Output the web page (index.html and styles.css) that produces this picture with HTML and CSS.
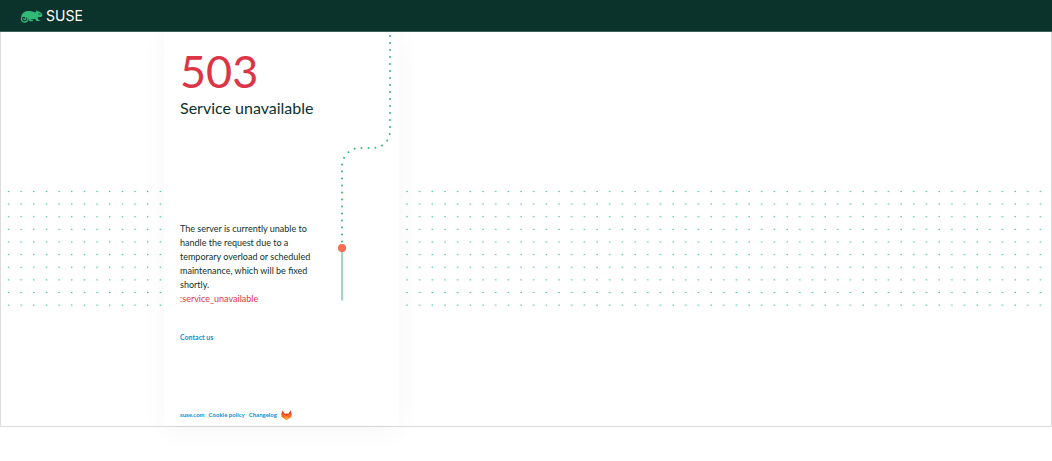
FILE: index.html
```html
<!DOCTYPE html>
<html lang="en">
<head>
<meta charset="utf-8">
<meta name="viewport" content="width=device-width, initial-scale=1">
<title>503 Service unavailable</title>
<link rel="stylesheet" href="styles.css">
</head>
<body>
<header class="topbar">
  <a class="brand" href="/" aria-label="SUSE">
    <svg class="brand-mark" viewBox="0 0 66 42" aria-hidden="true">
      <path d="M3 22C5 10 15 5 27 6C36 7 41 10 47 10V4C52 8 58 8 62 11C65 14 66 19 65 22C60 26 53 23 51 27C53 30 52 33 58 33V36H49C45 35 46 30 43 29C38 32 34 31 31 30C32 33 34 33 37 33V37H28C24 34 26 28 21 26Z" fill="#30ba78"/>
      <path d="M4 25C4 14 21 14 22 26C23 35 18 39 12 39C5 39 2 34 3 27C4 19 16 20 16 27C16 33 10 33 10 29" fill="none" stroke="#30ba78" stroke-width="4" stroke-linecap="round"/>
      <circle cx="57" cy="15" r="3" fill="#0c322c"/><circle cx="57" cy="15" r="2" fill="#30ba78"/>
    </svg>
    <span class="brand-name">SUSE</span>
  </a>
</header>
<div class="frame">
  <svg class="dots" aria-hidden="true">
    <defs><pattern id="dots-left" x="1" y="0" width="12.66" height="12.63" patternUnits="userSpaceOnUse"><circle cx="6.5" cy="1.5" r=".75" fill="#30ba78"/></pattern></defs>
    <rect width="100%" height="100%" fill="url(#dots-left)"/>
  </svg>
  <main class="card">
    <svg class="route" viewBox="0 0 60 270" aria-hidden="true">
      <path d="M54 4V99a17 17 0 0 1-17 17H24a18 18 0 0 0-18 18V213" fill="none" stroke="#30ba78" stroke-width="2" stroke-linecap="round" stroke-dasharray="0 7"/>
      <path d="M6 216V268.500" stroke="#97ddbb" stroke-width="2"/>
      <circle cx="6" cy="216" r="4" fill="#fe6b4f"/>
    </svg>
    <h1 class="code">503</h1>
    <h2 class="title">Service unavailable</h2>
    <div class="message">
      <p>The server is currently unable to handle the request due to a temporary overload or scheduled maintenance, which will be fixed shortly.</p>
      <p class="reason">:service_unavailable</p>
    </div>
    <a class="contact" href="/contact">Contact us</a>
    <footer class="links">
      <a href="https://www.suse.com">suse.com</a>
      <a href="/cookies">Cookie policy</a>
      <a href="/changelog">Changelog</a>
      <a class="repo" href="/source" aria-label="GitLab">
        <svg viewBox="0 0 36 32" aria-hidden="true">
          <path d="M5 1L11 12H25L31 1L35 16C36 20 34 22 32 23L18 32L4 23C2 22 0 20 1 16Z" fill="#fc6d26"/>
          <path d="M5 1L11 12H25L31 1L35 14C29 13 23 15 18 19C13 15 7 13 1 14Z" fill="#e24329"/>
          <path d="M10 26L18 20L26 26L18 32Z" fill="#fca326"/>
        </svg>
      </a>
    </footer>
  </main>
  <svg class="dots" aria-hidden="true">
    <defs><pattern id="dots-right" x="1" y="0" width="12.67" height="12.63" patternUnits="userSpaceOnUse"><circle cx="7" cy="1.5" r=".75" fill="#30ba78"/></pattern></defs>
    <rect width="100%" height="100%" fill="url(#dots-right)"/>
  </svg>
</div>
</body>
</html>
```
FILE: styles.css
```css
* { box-sizing: border-box; }

body {
  min-height: 100vh;
  margin: 0;
  padding-bottom: 32px;
  background: #fff;
  color: #0c322c;
  font-family: Lato, sans-serif;
}

h1, h2, p { margin: 0; font-weight: 400; }

a { color: #0d8fd4; text-decoration: none; }

.topbar {
  position: relative;
  z-index: 1;
  display: flex;
  align-items: center;
  height: 32px;
  padding: 0 20px;
  background: #0c322c;
  border-bottom: 1px solid #3f5f5a;
}

.brand { display: flex; align-items: center; gap: 3px; color: #fff; }
.brand-mark { width: 23px; height: 14px; }
.brand-name { font: 400 14px/16px Inter, sans-serif; }

.frame {
  display: grid;
  grid-template-columns: 7fr 235px 28fr;
  min-height: 395px;
  border: 1px solid #dcdcdc;
  border-top: 0;
}

.dots {
  width: 100%;
  height: 120px;
  margin-top: 158px;
}

.card {
  position: relative;
  display: flex;
  flex-direction: column;
  align-items: flex-start;
  padding: 15px 16px 6px;
  background: #fff;
  box-shadow: 0 4px 24px rgba(0, 0, 0, .04);
}

.route { position: absolute; top: 0; right: 3px; width: 60px; height: 270px; }

.code { color: #dc3545; font-size: 45px; line-height: 48px; }
.title { margin-top: 1px; font-size: 16px; line-height: 24px; }

.message { width: 136px; margin-top: 102px; font-size: 9px; line-height: 14px; }
.reason { color: #dc3545; }

.contact { margin-top: 25px; font-size: 7px; line-height: 12px; font-weight: 700; }

.links {
  display: flex;
  align-items: center;
  gap: 4px;
  margin-top: auto;
  font-size: 6px;
  line-height: 8px;
  font-weight: 700;
}

.repo svg { display: block; width: 11px; height: 10px; }
```
